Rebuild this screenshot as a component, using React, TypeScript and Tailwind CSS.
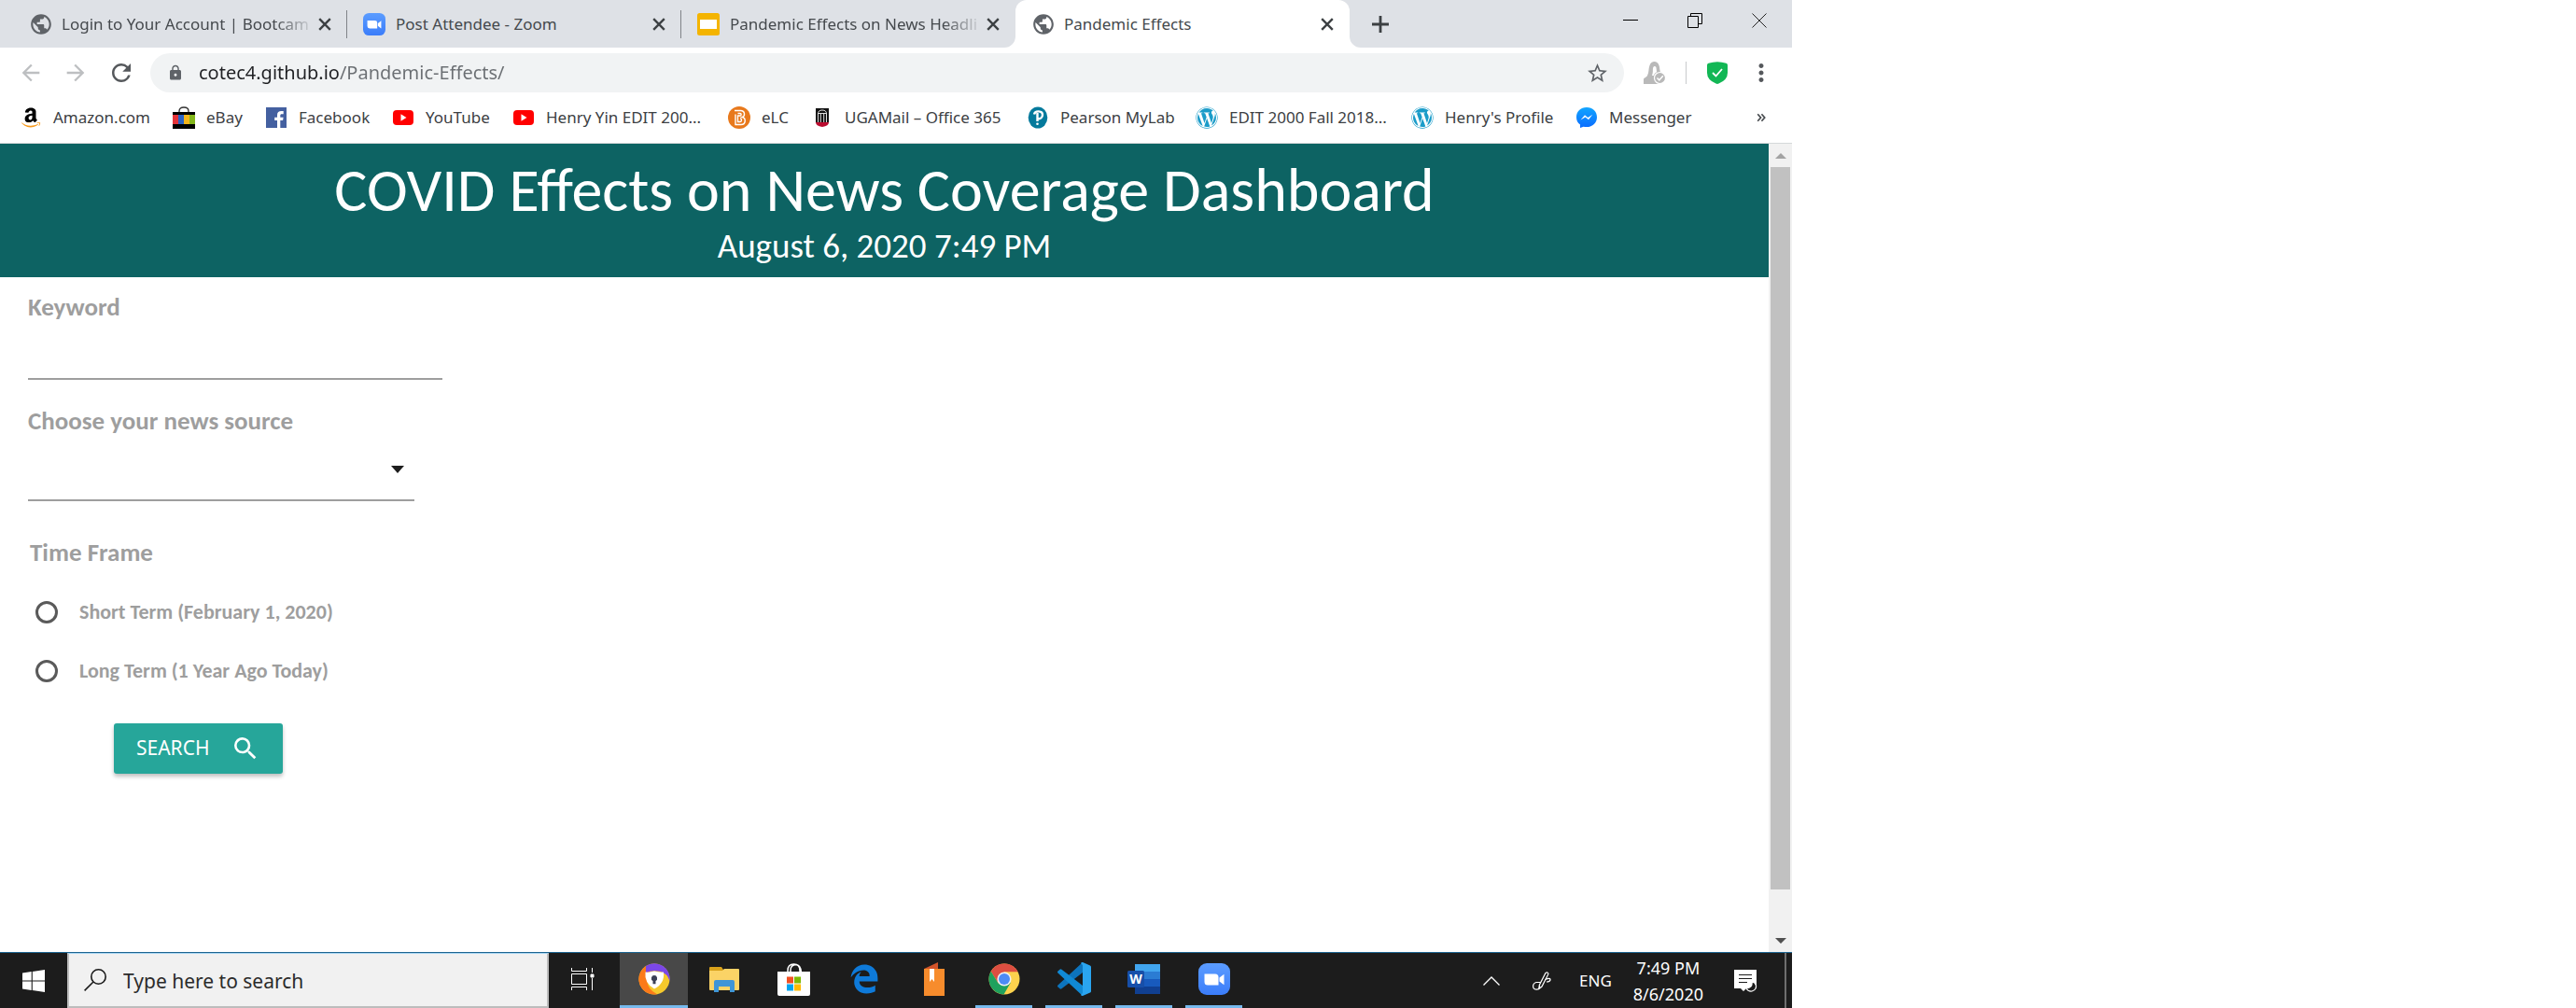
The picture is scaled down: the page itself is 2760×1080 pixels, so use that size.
import React, { type ReactNode } from "react";
import {
  MdArrowBack,
  MdArrowForward,
  MdRefresh,
  MdLock,
  MdStarBorder,
  MdMoreVert,
  MdPublic,
  MdSearch,
} from "react-icons/md";
import { FaAmazon, FaWordpress, FaEdgeLegacy } from "react-icons/fa6";

const ZoomIcon = ({ className }: { className: string }) => (
  <svg viewBox="0 0 34 34" className={className} aria-hidden="true">
    <defs>
      <linearGradient id="zoomBlue" x1="0" y1="0" x2="0" y2="1">
        <stop offset="0" stopColor="#5b9cff" />
        <stop offset="1" stopColor="#3b7dfa" />
      </linearGradient>
    </defs>
    <rect width="34" height="34" rx="9" fill="url(#zoomBlue)" />
    <path d="M6.5 11.5h11.500a3.500 3.500 0 0 1 3.500 3.500v8.500H10a3.500 3.500 0 0 1-3.500-3.500z" fill="#fff" />
    <path d="M22.500 15.500l5-3.700v11.400l-5-3.700z" fill="#fff" />
  </svg>
);

const SlidesIcon = () => (
  <svg viewBox="0 0 24 24" className="size-6 shrink-0" aria-hidden="true">
    <rect width="24" height="24" rx="2.500" fill="#f4b400" />
    <rect x="3" y="7" width="18" height="10" fill="#fff" />
  </svg>
);

const GlobeIcon = () => <MdPublic className="size-[26px] shrink-0 text-[#5f6368]" aria-hidden="true" />;

type Tab = { title: string; icon: ReactNode; active?: boolean; divider?: boolean; faded?: boolean };

const tabs: Tab[] = [
  { title: "Login to Your Account | Bootcam", icon: <GlobeIcon />, divider: true, faded: true },
  { title: "Post Attendee - Zoom", icon: <ZoomIcon className="size-6 shrink-0" />, divider: true },
  { title: "Pandemic Effects on News Headli", icon: <SlidesIcon />, faded: true },
  { title: "Pandemic Effects", icon: <GlobeIcon />, active: true },
];

const TabFlare = ({ className }: { className: string }) => (
  <svg viewBox="0 0 12 12" className={className} aria-hidden="true">
    <path d="M12 0v12H0A12 12 0 0 0 12 0z" fill="#fff" />
  </svg>
);

function TabStrip() {
  return (
    <div className="flex h-[51px] items-center bg-[#dee1e6] pl-[14px]">
      {tabs.map((tab) => (
        <div
          key={tab.title}
          className={
            tab.active
              ? "relative flex h-full w-[358px] items-center rounded-t-xl bg-white pl-[17px] pr-[17px]"
              : "relative flex h-full w-[358px] items-center pl-[17px] pr-[17px]"
          }
        >
          {tab.active && <TabFlare className="absolute -left-3 bottom-0 size-3" />}
          {tab.active && <TabFlare className="absolute -right-3 bottom-0 size-3 -scale-x-100" />}
          <button className="flex min-w-0 flex-1 items-center text-left">
            <span className="flex w-[35px] shrink-0">{tab.icon}</span>
            <span
              className={
                tab.faded
                  ? "whitespace-nowrap text-[17px] text-[#45494d] [mask-image:linear-gradient(to_right,black_86%,rgb(0_0_0/0.15))]"
                  : "whitespace-nowrap text-[17px] text-[#45494d]"
              }
            >
              {tab.title}
            </span>
          </button>
          <button aria-label={`Close ${tab.title}`} className="ml-1">
            <svg viewBox="0 0 14 14" className="size-[14px]" fill="none" stroke="#3c4043" strokeWidth="2.400" aria-hidden="true">
              <path d="M1.200 1.200l11.600 11.600M12.800 1.200L1.200 12.800" />
            </svg>
          </button>
          {tab.divider && <span className="absolute right-0 top-[11px] h-[30px] w-px bg-[#808388]" />}
        </div>
      ))}
      <button aria-label="New tab" className="ml-6">
        <svg viewBox="0 0 18 18" className="size-[18px]" fill="none" stroke="#3c4043" strokeWidth="2.800" aria-hidden="true">
          <path d="M9 0v18M0 9h18" />
        </svg>
      </button>
      <div className="ml-auto flex items-start gap-[53px] pb-2 pr-[27px]">
        <button aria-label="Minimize">
          <svg viewBox="0 0 16 16" className="size-4" aria-hidden="true">
            <path d="M0 7.500h16" stroke="#000" />
          </svg>
        </button>
        <button aria-label="Restore">
          <svg viewBox="0 0 16 16" className="size-4" fill="none" stroke="#000" aria-hidden="true">
            <path d="M.5 3.500h11v12H.5zM3.500 3.500v-3h12v11h-4" />
          </svg>
        </button>
        <button aria-label="Close window">
          <svg viewBox="0 0 16 16" className="size-4" fill="none" stroke="#222" aria-hidden="true">
            <path d="M.5.5l15 15M15.500.5l-15 15" />
          </svg>
        </button>
      </div>
    </div>
  );
}

function Toolbar() {
  return (
    <div className="flex h-[54px] items-center pl-[19px] pr-[18px]">
      <button aria-label="Back" className="text-[#bdbfc1]">
        <MdArrowBack className="size-7" />
      </button>
      <button aria-label="Forward" className="ml-5 text-[#bdbfc1]">
        <MdArrowForward className="size-7" />
      </button>
      <button aria-label="Reload" className="ml-5 text-[#55585c]">
        <MdRefresh className="size-[30px]" />
      </button>
      <div className="ml-4 flex h-[42px] flex-1 items-center rounded-full bg-[#f1f3f4] pl-[18px] pr-4">
        <MdLock className="size-[18px] shrink-0 text-[#5f6368]" aria-hidden="true" />
        <input
          type="text"
          aria-label="Address"
          defaultValue="cotec4.github.io/Pandemic-Effects/"
          className="ml-4 min-w-0 flex-1 bg-[linear-gradient(to_right,#202124_150px,#6b6f73_150px)] bg-clip-text text-xl leading-7 text-transparent outline-none"
        />
        <button aria-label="Bookmark this page" className="text-[#5f6368]">
          <MdStarBorder className="size-[25px]" />
        </button>
      </div>
      <button aria-label="Security extension" className="ml-[21px]">
        <svg viewBox="0 0 24 24" className="size-6" aria-hidden="true">
          <path d="M0 24v-5c0-1.500 3-2 4-4C6 11 5 8 6.500 4 8-1.300 15-1.300 16.500 4c1 3 .5 5 2 9l4 6-4 5z" fill="#b9b9b9" />
          <path d="M9 15c1.500-4 .5-6 1.200-8.500.5-2 2.800-2 3.300 0 .4 1.500.2 3 .6 4.700C12 12 11 14 11 15z" fill="#fff" />
          <circle cx="17.500" cy="17.500" r="6" fill="#b9b9b9" stroke="#fff" strokeWidth="1.200" />
          <path d="M14.500 17.500l2.300 2.300 4-4.500" fill="none" stroke="#fff" strokeWidth="1.500" />
        </svg>
      </button>
      <span className="ml-[21px] h-6 w-px bg-[#c8cacc]" />
      <button aria-label="Protection status" className="ml-[22px]">
        <svg viewBox="0 0 22 24" className="h-6 w-[22px]" aria-hidden="true">
          <path d="M1.500 1.800Q11-1.500 20.500 1.800q1.500.5 1.500 2V12q0 7.500-9.500 11.600-1.500.6-3 0Q0 19.500 0 12V3.800q0-1.500 1.500-2z" fill="#12b755" />
          <path d="M6 12l3.500 3.500L16 8" fill="none" stroke="#fff" strokeWidth="1.800" />
        </svg>
      </button>
      <button aria-label="Menu" className="ml-[21px] text-[#55585c]">
        <MdMoreVert className="size-[30px]" />
      </button>
    </div>
  );
}

const AmazonIcon = () => (
  <span className="relative block size-6 text-black">
    <FaAmazon className="size-6 [clip-path:inset(0_0_29%_0)]" />
    <FaAmazon className="absolute inset-0 size-6 text-[#f79a1c] [clip-path:inset(71%_0_0_0)]" />
  </span>
);

const EbayIcon = () => (
  <svg viewBox="0 0 24 24" className="size-6" aria-hidden="true">
    <path d="M7 7V5q0-4 5-4t5 4v2" fill="none" stroke="#333" strokeWidth="1.300" />
    <path d="M0 6h24v3H0zM0 19h24v5H0z" fill="#000" />
    <path d="M0 9h6v10H0z" fill="#e5343a" />
    <path d="M6 9h6v10H6z" fill="#2b63c4" />
    <path d="M12 9h6v10h-6z" fill="#f4b51b" />
    <path d="M18 9h6v10h-6z" fill="#84b71b" />
  </svg>
);

const FacebookIcon = () => (
  <svg viewBox="0 0 24 24" className="size-6" aria-hidden="true">
    <rect x="1" y="1" width="22" height="22" fill="#4460a0" />
    <path d="M13 23v-8h-2.800v-3.300H13V9.200C13 6.200 14.700 5 17.400 5h2.300v3.200h-1.800c-1.300 0-1.600.6-1.600 1.700v1.800h3.300l-.5 3.300h-2.800v8z" fill="#fff" />
  </svg>
);

const YouTubeIcon = () => (
  <svg viewBox="0 0 24 24" className="size-6" aria-hidden="true">
    <rect x="1" y="4" width="22" height="16" rx="4" fill="#f00" />
    <path d="M9.500 8.300v7.400L15.500 12z" fill="#fff" />
  </svg>
);

const LearningIcon = () => (
  <svg viewBox="0 0 24 24" className="size-6" aria-hidden="true">
    <circle cx="12" cy="12" r="12" fill="#e8791c" />
    <path
      d="M7 4.500h6.500c5 0 5 6 1.800 7 4.200 1 4 8-1.300 8H8V8.500M10.500 7.500H13c1.500 0 1.500 2.500 0 2.500h-2.500v6.500H13c2 0 2-3.500 0-3.500"
      fill="none"
      stroke="#fff"
      strokeWidth="1.400"
    />
  </svg>
);

const UgaIcon = () => (
  <svg viewBox="0 0 24 24" className="size-6" aria-hidden="true">
    <path d="M5 2h14v15H5z" fill="#111" />
    <path d="M5 17h14q0 4-7 5-7-1-7-5z" fill="#ba0c2f" />
    <path d="M7.500 17V8q0-4 4.500-4t4.500 4v9M10.300 17V8M13.700 17V8M7 7.500h10" fill="none" stroke="#ddd" />
  </svg>
);

const PearsonIcon = () => (
  <svg viewBox="0 0 24 24" className="size-6" aria-hidden="true">
    <ellipse cx="12" cy="12" rx="10.300" ry="11.500" fill="#047a9c" />
    <path d="M8 8.500c1-4.500 9-4 9 .5 0 3-2.500 4.500-5 4.500M11.500 7v9" fill="none" stroke="#fff" strokeWidth="2.400" />
    <circle cx="11.500" cy="18.800" r="1.300" fill="#fff" />
  </svg>
);

const MessengerIcon = () => (
  <svg viewBox="0 0 24 24" className="size-6" aria-hidden="true">
    <defs>
      <linearGradient id="messengerBlue" x1="0" y1="0" x2="0" y2="1">
        <stop offset="0" stopColor="#12a5ff" />
        <stop offset="1" stopColor="#0a6cff" />
      </linearGradient>
    </defs>
    <path d="M12 1C5.500 1 1 5.500 1 11.500c0 3.500 1.400 6.200 4 8V23l3.600-1.300c1 .3 2.200.4 3.400.4 6.500 0 11-4.500 11-10.600S18.500 1 12 1z" fill="url(#messengerBlue)" />
    <path d="M5.500 14.500L10 9.300l3.300 2.800 5-3.300-4.300 5.400-3.400-2.800z" fill="#fff" />
  </svg>
);

const WordPressIcon = () => <FaWordpress className="size-6 text-[#1b9cc9]" />;

const bookmarks = [
  { label: "Amazon.com", icon: <AmazonIcon />, width: "w-[164px]" },
  { label: "eBay", icon: <EbayIcon />, width: "w-[99px]" },
  { label: "Facebook", icon: <FacebookIcon />, width: "w-[136px]" },
  { label: "YouTube", icon: <YouTubeIcon />, width: "w-[129px]" },
  { label: "Henry Yin EDIT 200...", icon: <YouTubeIcon />, width: "w-[231px]" },
  { label: "eLC", icon: <LearningIcon />, width: "w-[89px]" },
  { label: "UGAMail – Office 365", icon: <UgaIcon />, width: "w-[231px]" },
  { label: "Pearson MyLab", icon: <PearsonIcon />, width: "w-[181px]" },
  { label: "EDIT 2000 Fall 2018...", icon: <WordPressIcon />, width: "w-[231px]" },
  { label: "Henry's Profile", icon: <WordPressIcon />, width: "w-[176px]" },
  { label: "Messenger", icon: <MessengerIcon />, width: "w-[140px]" },
];

function BookmarksBar() {
  return (
    <nav className="flex h-[49px] items-center border-b border-[#d5d8da] pb-[6px] pl-[21px] pr-7">
      {bookmarks.map((b) => (
        <a
          key={b.label}
          href="#"
          className={`flex shrink-0 items-center gap-3 whitespace-nowrap text-[17px] text-[#3c4043] ${b.width}`}
        >
          <span className="shrink-0">{b.icon}</span>
          {b.label}
        </a>
      ))}
      <button aria-label="More bookmarks" className="ml-auto">
        <svg viewBox="0 0 12 12" className="size-[10px]" fill="none" stroke="#45494d" strokeWidth="2" aria-hidden="true">
          <path d="M1.500 1.500L5.500 6l-4 4.500M6.500 1.500l4 4.500-4 4.500" />
        </svg>
      </button>
    </nav>
  );
}

function Dashboard() {
  return (
    <main className="min-w-0 flex-1 font-[Carlito,Calibri,Lato,sans-serif]">
      <header className="bg-[#0d6363] pb-[9px] pt-[14px] text-center text-white">
        <h1 className="text-[66px] leading-[72px]">COVID Effects on News Coverage Dashboard</h1>
        <p className="text-[37px] leading-[48px]">August 6, 2020 7:49 PM</p>
      </header>
      <form className="px-[30px] pt-4 font-bold text-[#9e9e9e]" onSubmit={(e) => e.preventDefault()}>
        <label htmlFor="keyword" className="block text-[27px] leading-8">
          Keyword
        </label>
        <input
          id="keyword"
          type="text"
          className="block h-[62px] w-full max-w-[444px] border-b-2 border-[#9e9e9e] text-[27px] font-normal text-black outline-none"
        />
        <label htmlFor="source" className="mt-7 block text-[27px] leading-8">
          Choose your news source
        </label>
        <div className="relative max-w-[414px]">
          <select
            id="source"
            defaultValue=""
            className="block h-[70px] w-full appearance-none border-b-2 border-[#9e9e9e] bg-transparent text-[27px] font-normal text-black outline-none"
          >
            <option value="" />
          </select>
          <svg viewBox="0 0 14 8" className="pointer-events-none absolute right-[11px] top-8 h-2 w-[14px]" aria-hidden="true">
            <path d="M0 0h14L7 8z" fill="#1d1d1d" />
          </svg>
        </div>
        <fieldset className="mt-[39px]">
          <legend className="mb-4 px-[2px] text-[27px] leading-8">Time Frame</legend>
          {["Short Term (February 1, 2020)", "Long Term (1 Year Ago Today)"].map((label) => (
            <label key={label} className="flex h-[63px] items-center gap-[23px] pl-2 text-[22px]">
              <input
                type="radio"
                name="timeframe"
                className="size-6 appearance-none rounded-full border-[3px] border-[#5a5a5a] checked:border-[#26a69a] checked:bg-[#26a69a]"
              />
              {label}
            </label>
          ))}
        </fieldset>
        <button
          type="submit"
          className="ml-[92px] mt-[25px] flex h-[54px] items-center gap-[26px] rounded-[3px] bg-[#26a69a] pl-6 pr-7 font-['Noto_Sans',sans-serif] text-[21px] font-normal text-white shadow-[0_3px_4px_rgba(0,0,0,0.25)]"
        >
          SEARCH
          <MdSearch className="-m-1 size-8" stroke="none" />
        </button>
      </form>
    </main>
  );
}

function ScrollBar() {
  return (
    <div className="flex w-[25px] flex-col items-center bg-[#f1f1f1]">
      <button aria-label="Scroll up" className="flex h-[25px] items-center">
        <svg viewBox="0 0 12 6" className="h-[6px] w-3" aria-hidden="true">
          <path d="M0 6h12L6 0z" fill="#a3a3a3" />
        </svg>
      </button>
      <div className="w-[21px] flex-[774] bg-[#c1c1c1]" />
      <div className="flex-[42]" />
      <button aria-label="Scroll down" className="flex h-[25px] items-center">
        <svg viewBox="0 0 12 6" className="h-[6px] w-3" aria-hidden="true">
          <path d="M0 0h12L6 6z" fill="#505050" />
        </svg>
      </button>
    </div>
  );
}

const SecureBrowserIcon = () => (
  <svg viewBox="0 0 34 34" className="size-[34px]" aria-hidden="true">
    <circle cx="17" cy="17" r="16.500" fill="#f5c92c" />
    <path d="M17 17L9 2.500A16.500 16.500 0 0 0 12 32.800q4 1 8 .4-10-5-11-15z" fill="#fb7a1a" />
    <path d="M8 3A16.500 16.500 0 0 1 33.500 19Q31 11 24 9 15 7 8 10z" fill="#7b47e8" />
    <path d="M17 8.500q5 1.500 10 1 1.500 12-10 18Q6 21 7.500 9.500 12 10 17 8.500z" fill="#fff" />
    <path d="M17 13a3.200 3.200 0 0 0-1.500 6v3.200h3V19a3.200 3.200 0 0 0-1.500-6z" fill="#3a3f55" />
  </svg>
);

const FolderIcon = () => (
  <svg viewBox="0 0 32 28" className="h-7 w-8" aria-hidden="true">
    <path d="M0 2q0-1 1-1h12l2 3v5H0z" fill="#d9a21b" />
    <path d="M0 5h14l2-2h15q1 0 1 1v21q0 1-1 1H1q-1 0-1-1z" fill="#fbd366" />
    <path d="M5 28V17q0-2 2-2h18q2 0 2 2v11h-5v-6H10v6z" fill="#3f95d6" />
  </svg>
);

const StoreIcon = () => (
  <svg viewBox="0 0 35 35" className="size-[35px]" aria-hidden="true">
    <path d="M11 10V8q0-7 6.500-7T24 8v2M14 10V7.500q0-5 5-6 6 0 6.500 8.500" fill="none" stroke="#fff" strokeWidth="1.500" />
    <path d="M0 9h35v24q0 2-2 2H2q-2 0-2-2z" fill="#fff" />
    <path d="M10 14.500h7v7h-7z" fill="#f25022" />
    <path d="M18 14.500h7v7h-7z" fill="#7fba00" />
    <path d="M10 22.500h7v7h-7z" fill="#00a4ef" />
    <path d="M18 22.500h7v7h-7z" fill="#ffb900" />
  </svg>
);

const BookIcon = () => (
  <svg viewBox="0 0 22 36" className="h-9 w-[22px]" aria-hidden="true">
    <path d="M0 7L15 0v9H0z" fill="#d2542a" />
    <path d="M0 7h22v29H0z" fill="#f78c2c" />
    <path d="M6 7h5v14l-2.500-3L6 21z" fill="#fff" />
  </svg>
);

const ChromeIcon = () => (
  <svg viewBox="0 0 34 34" className="size-[34px]" aria-hidden="true">
    <circle cx="17" cy="17" r="16.500" fill="#fdd24d" />
    <path d="M2.700 8.800A16.500 16.500 0 0 1 31.600 9.300H17L10.300 21z" fill="#dc4e41" />
    <path d="M2.700 8.700A16.500 16.500 0 0 0 16.500 33.500L24 20.500 10.600 21.500z" fill="#1fa15d" />
    <circle cx="17" cy="17" r="7.600" fill="#f1f1f1" />
    <circle cx="17" cy="17" r="6" fill="#4c8bf5" />
  </svg>
);

const CodeIcon = () => (
  <svg viewBox="0 0 36 36" className="size-9" aria-hidden="true">
    <path d="M27 0L.5 24.500q-1 1 0 2l2 1.800q1 .8 2 0L27 11z" fill="#0d74bd" />
    <path d="M27 36L.5 11.500q-1-1 0-2l2-1.800q1-.8 2 0L27 25z" fill="#1089d4" />
    <path d="M27 0l8 3.500q1 .5 1 1.500v26q0 1-1 1.500L27 36q-1.500 0-2-1l2-2V3l-2-2q.5-1 2-1z" fill="#2aa5f0" />
  </svg>
);

const WordIcon = () => (
  <svg viewBox="0 0 35 34" className="h-[34px] w-[35px]" aria-hidden="true">
    <path d="M8 1h27v8H8z" fill="#41a5ee" />
    <path d="M8 9h27v8H8z" fill="#2b7cd3" />
    <path d="M8 17h27v8H8z" fill="#185abd" />
    <path d="M8 25h27v8H8z" fill="#103f91" />
    <rect y="8" width="18" height="18" rx="1.500" fill="#174fa9" />
    <text x="9" y="22" textAnchor="middle" fontSize="14" fontWeight="700" fill="#fff">
      W
    </text>
  </svg>
);

type TaskbarApp = { name: string; icon: ReactNode; focused?: boolean; running?: boolean };

const apps: TaskbarApp[] = [
  { name: "Secure Browser", icon: <SecureBrowserIcon />, focused: true },
  { name: "File Explorer", icon: <FolderIcon /> },
  { name: "Microsoft Store", icon: <StoreIcon /> },
  { name: "Edge", icon: <FaEdgeLegacy className="size-8 text-[#0e7ad9]" /> },
  { name: "Bookmarks", icon: <BookIcon /> },
  { name: "Chrome", icon: <ChromeIcon />, running: true },
  { name: "Visual Studio Code", icon: <CodeIcon />, running: true },
  { name: "Word", icon: <WordIcon />, running: true },
  { name: "Zoom", icon: <ZoomIcon className="size-[34px]" />, running: true },
];

function Taskbar() {
  return (
    <footer className="flex h-[60px] items-stretch border-t border-[#1c6490] bg-[#1c1c1c] text-white">
      <button aria-label="Start" className="flex w-[72px] items-center justify-center">
        <svg viewBox="0 0 24 24" className="size-6" aria-hidden="true">
          <path d="M0 3.400l9.700-1.300v9.300H0zM10.800 1.900L24 0v11.400H10.800zM0 12.600h9.700v9.300L0 20.600zM10.800 12.600H24V24l-13.200-1.900z" fill="#fff" />
        </svg>
      </button>
      <label className="flex w-[516px] items-center border-2 border-t border-[#bdbdbd] border-t-[#a9d5f2] bg-[#f1f1f1] pl-4">
        <svg viewBox="0 0 24 24" className="size-6 shrink-0" fill="none" stroke="#1a1a1a" strokeWidth="1.600" aria-hidden="true">
          <circle cx="15.500" cy="8.500" r="7.700" />
          <path d="M10 14L.6 23.400" />
        </svg>
        <input
          type="text"
          aria-label="Search"
          placeholder="Type here to search"
          className="ml-[18px] min-w-0 flex-1 bg-transparent pt-1 text-[21px] text-black outline-none placeholder:text-[#2b2b2b] placeholder:opacity-100"
        />
      </label>
      <button aria-label="Task View" className="flex w-[75px] items-center justify-center pb-1 pr-[2px]">
        <svg viewBox="0 0 25 24" className="h-6 w-[25px]" fill="none" stroke="#fff" aria-hidden="true">
          <path d="M.5 0v3.500h16V0M.5 24v-3.500h16V24M.5 6.500h16v11H.5zM22.500 0v5M22.500 11v13" />
          <path d="M21 7h3v3h-3z" fill="#fff" />
        </svg>
      </button>
      {apps.map((app) => (
        <button key={app.name} aria-label={app.name} className="flex w-[75px] justify-center">
          <span
            className={
              app.focused
                ? "flex w-[73px] items-center justify-center border-b-[3px] border-[#76b9ed] bg-[#484848]"
                : app.running
                  ? "flex w-[61px] items-center justify-center border-b-[3px] border-[#76b9ed]"
                  : "flex w-[61px] items-center justify-center border-b-[3px] border-transparent"
            }
          >
            {app.icon}
          </span>
        </button>
      ))}
      <div className="ml-auto flex items-center">
        <button aria-label="Show hidden icons">
          <svg viewBox="0 0 18 10" className="h-[10px] w-[18px]" fill="none" stroke="#fff" strokeWidth="1.300" aria-hidden="true">
            <path d="M.5 9.500L9 1l8.500 8.500" />
          </svg>
        </button>
        <button aria-label="Ink workspace" className="ml-[35px]">
          <svg viewBox="0 0 20 20" className="size-5" fill="none" stroke="#fff" strokeWidth="1.200" aria-hidden="true">
            <path d="M14 1.500q2.500-1.500 3 1L10 16l-3 2.500.3-4z" />
            <path d="M13.500 8.500q6-2.500 5.500.5-.5 2-4 2M8.500 11.500H4Q.5 12.500.6 16q.4 3.500 4.400 3.200 3-1 2.500-4" />
          </svg>
        </button>
        <span className="ml-[30px] text-[17px]">ENG</span>
        <button className="ml-[23px] text-center text-[18px] leading-7">
          7:49 PM
          <br />
          8/6/2020
        </button>
        <button aria-label="Notifications" className="ml-[33px]">
          <svg viewBox="0 0 25 24" className="h-6 w-[25px]" aria-hidden="true">
            <path d="M0 0h24v20H13l-3 3-3-3H0z" fill="#fff" />
            <path d="M5 5.500h14M5 9.500h14M5 13.500h9" stroke="#1c1c1c" strokeWidth="1.200" />
            <path d="M19 13q1 6-6 7 2 3.500 6 3 5-1.500 4.500-6-1-3.500-4.500-4z" fill="#1c1c1c" stroke="#fff" strokeWidth="1.200" />
          </svg>
        </button>
        <span className="ml-[29px] mr-[6px] w-[2px] self-stretch bg-[#6e6e6e]" />
      </div>
    </footer>
  );
}

export default function App() {
  return (
    <div className="min-h-screen bg-white">
      <div className="flex min-h-screen w-full max-w-[1920px] flex-col font-['Noto_Sans','Open_Sans',sans-serif]">
        <TabStrip />
        <Toolbar />
        <BookmarksBar />
        <div className="flex flex-1 items-stretch">
          <Dashboard />
          <ScrollBar />
        </div>
        <Taskbar />
      </div>
    </div>
  );
}
